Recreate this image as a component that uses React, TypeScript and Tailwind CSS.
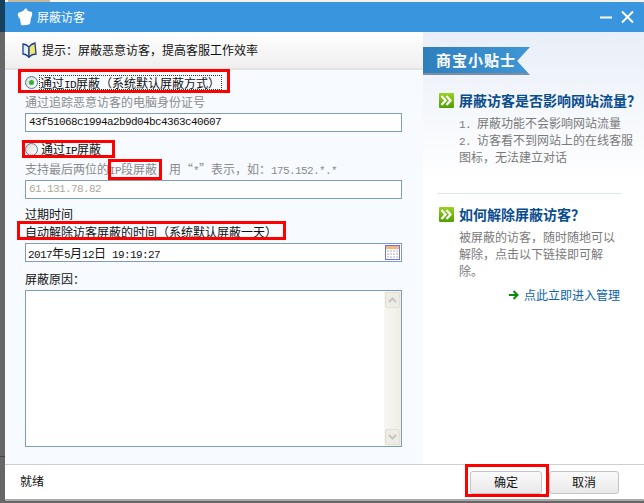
import React from 'react';

const cjk = "font-['Noto_Sans_CJK_SC','Liberation_Sans',sans-serif]";
const mono = "font-['Liberation_Mono','Noto_Sans_CJK_SC',monospace] text-[11px] leading-none tracking-[-0.6px]";

// half width latin, the dialog's font gives every latin char 6px
function L({ children }: { children: React.ReactNode }) {
  return <span className={`whitespace-pre ${mono}`}>{children}</span>;
}

function GreenChevrons({ className }: { className: string }) {
  return (
    <svg viewBox="0 0 15 15" className={className}>
      <defs>
        <linearGradient id="chev" x1="0" y1="0" x2="0" y2="1">
          <stop offset="0" stopColor="#9ad321" />
          <stop offset="1" stopColor="#4f9e06" />
        </linearGradient>
      </defs>
      <rect width="15" height="15" rx="1" fill="url(#chev)" />
      <path d="M2.5 3 L6.5 7.5 L2.5 12 M7.5 3 L11.5 7.5 L7.5 12" fill="none" stroke="#fff" strokeWidth="2.2" />
    </svg>
  );
}

function Radio({ checked }: { checked?: boolean }) {
  return (
    <span className="flex h-[13px] w-[13px] shrink-0 items-center justify-center rounded-full border border-[#4f7aa6] bg-gradient-to-br from-[#d8d8d2] to-white">
      {checked && <span className="h-[5px] w-[5px] rounded-full bg-[#35b035]" />}
    </span>
  );
}

function ScrollButton({ up }: { up?: boolean }) {
  return (
    <div className="flex h-[16px] w-[15px] items-center justify-center rounded-[2px] border border-[#e2e1d8] bg-[#eeede5]">
      <svg viewBox="0 0 9 6" className="h-[6px] w-[9px]">
        <path d={up ? 'M1 5 L4.5 1.5 L8 5' : 'M1 1 L4.5 4.5 L8 1'} fill="none" stroke="#c8c7be" strokeWidth="2" />
      </svg>
    </div>
  );
}

function RedBox({ className }: { className: string }) {
  return <div className={`pointer-events-none absolute border-[3px] border-[#ff0000] ${className}`} />;
}

export default function App() {
  return (
    <div className={`relative h-[503px] w-[644px] overflow-hidden bg-[#676767] pt-[2px] pl-[5px] text-[12px] ${cjk}`}>
      {/* stuff behind the dialog */}
      <div className="absolute top-0 left-0 h-[2px] w-full bg-[#f4f2ec]" />
      <div className="absolute top-0 left-[8px] h-[2px] w-[42px] bg-[#c9b79a]" />
      <div className="absolute top-0 left-0 h-[32px] w-[5px] bg-[#17405e]" />
      <div className="absolute top-[456px] left-0 h-px w-[5px] bg-[#444]" />

      <div className="relative flex h-[499px] w-[639px] flex-col overflow-hidden rounded-b-[3px] rounded-tr-[3px] bg-white">
        {/* title bar */}
        <div className="flex h-[30px] shrink-0 items-center bg-[#3a95df] pl-[12px] pr-[10px] text-white">
          <svg viewBox="0 0 16 18" className="h-[18px] w-[16px]">
            <path d="M9 0 L11 3 L15 4 Q16 7 14 10 L13 16 Q8 18 4 17 L3 11 Q0 8 1 5 L6 3 Z" fill="#fff" />
          </svg>
          <span className="ml-[4px] text-[12px]">屏蔽访客</span>
          <svg viewBox="0 0 34 14" className="ml-auto h-[14px] w-[34px]">
            <path d="M0 7.5 H12" stroke="#fff" strokeWidth="2" />
            <path d="M22 1.5 L33 12.5 M33 1.5 L22 12.5" stroke="#fff" strokeWidth="2" />
          </svg>
        </div>

        <div className="flex min-h-0 flex-1">
          {/* left column */}
          <div className="flex w-[418px] shrink-0 flex-col">
            <div className="flex h-[38px] shrink-0 items-center border-b-2 border-[#e4e4e4] bg-gradient-to-b from-white to-[#efefef] pl-[17px] text-[#111]">
              <svg viewBox="0 0 15 16" className="h-[16px] w-[15px]">
                <path d="M1 2 Q4 2 7 5 L7 15 Q4 12 1 12 Z" fill="#dff0fb" stroke="#1d3f8c" strokeWidth="1.3" />
                <path d="M7 5 Q9 2 13 1 L14 12 Q10 12 7 15 Z" fill="#f4e56c" stroke="#1d3f8c" strokeWidth="1.3" />
              </svg>
              <span className="ml-[5px]">提示：屏蔽恶意访客，提高客服工作效率</span>
            </div>

            <div className="flex-1 bg-[#f7fbff] pl-[20px]">
              <div className="mt-[3px] flex h-[18px] items-center text-[#111]">
                <Radio checked />
                <span className="ml-[1px] h-[15px] border border-dotted border-[#333] pr-[1px] leading-[13px]">通过<L>ID</L>屏蔽（系统默认屏蔽方式）</span>
              </div>
              <div className="mt-[3px] h-[16px] leading-[16px] text-[#8a8a8a]">通过追踪恶意访客的电脑身份证号</div>
              <div className="mt-[3px] flex h-[19px] w-[377px] items-center border border-[#7f9db9] bg-white pl-[3px] text-[#111]">
                <L>43f51068c1994a2b9d04bc4363c40607</L>
              </div>

              <div className="mt-[8px] flex h-[18px] items-center text-[#111]">
                <Radio />
                <span className="ml-[3px]">通过<L>IP</L>屏蔽</span>
              </div>
              <div className="mt-[3px] h-[16px] leading-[16px] whitespace-nowrap text-[#8a8a8a]">支持最后两位的<L>IP</L>段屏蔽，用“<L>*</L>”表示，如：<L>175.152.*.*</L></div>
              <div className="mt-[3px] flex h-[19px] w-[377px] items-center border border-[#7f9db9] bg-white pl-[3px] text-[#aca899]">
                <L>61.131.78.82</L>
              </div>

              <div className="mt-[7px] h-[16px] leading-[16px] text-[#111]">过期时间</div>
              <div className="mt-[2px] h-[16px] leading-[16px] text-[#111]">自动解除访客屏蔽的时间（系统默认屏蔽一天）</div>
              <div className="mt-[3px] flex h-[19px] w-[377px] items-center justify-between border border-[#7f9db9] bg-white pl-[2px] pr-[1px] text-[#111]">
                <span><L>2017</L>年<L>5</L>月<L>12</L>日<L> 19:19:27</L></span>
                <span className="flex h-[15px] w-[15px] flex-col border border-[#6f6ff0] bg-[#d5d5ea]">
                  <span className="h-[3px] w-full bg-[#f2b77c]" />
                  <span className="flex-1 bg-[linear-gradient(#fff_1px,transparent_1px),linear-gradient(90deg,#fff_1px,transparent_1px)] bg-[length:3px_3px]" />
                </span>
              </div>

              <div className="mt-[9px] h-[16px] leading-[16px] text-[#111]">屏蔽原因：</div>
              <div className="mt-[3px] flex h-[157px] w-[377px] justify-end border border-[#7f9db9] bg-white">
                <div className="flex w-[17px] flex-col justify-between bg-gradient-to-r from-[#f7f6f1] to-[#efeee6] p-[1px]">
                  <ScrollButton up />
                  <ScrollButton />
                </div>
              </div>
            </div>
          </div>

          {/* right column */}
          <div className="flex-1 bg-[linear-gradient(#e9eff8,#ffffff_150px)] pt-[15px] text-[#7a7a7a]">
            <div className="flex h-[28px] w-[107px] items-center border-b-2 border-[#7e8ea0] bg-gradient-to-r from-[#2f7fbd] to-[#3f97d6] pl-[13px] text-[15px] font-bold tracking-[1px] text-white [clip-path:polygon(0_0,100%_0,88%_50%,100%_100%,0_100%)]">
              商宝小贴士
            </div>

            <div className="mt-[18px] flex items-center pl-[16px]">
              <GreenChevrons className="h-[15px] w-[15px]" />
              <span className="ml-[5px] text-[14px] leading-[15px] font-bold whitespace-nowrap text-[#0a4d8f]">屏蔽访客是否影响网站流量？</span>
            </div>
            <div className="mt-[6px] pl-[36px] leading-[17px]">
              <div className="h-[17px]"><L>1. </L>屏蔽功能不会影响网站流量</div>
              <div className="h-[17px]"><L>2. </L>访客看不到网站上的在线客服</div>
              <div className="h-[17px]">图标，无法建立对话</div>
            </div>

            <div className="mt-[28px] ml-[14px] h-px w-[184px] bg-[#dfe6ec]" />

            <div className="mt-[13px] flex items-center pl-[16px]">
              <GreenChevrons className="h-[15px] w-[15px]" />
              <span className="ml-[5px] text-[14px] leading-[15px] font-bold text-[#0a4d8f]">如何解除屏蔽访客？</span>
            </div>
            <div className="mt-[6px] w-[196px] pl-[36px] leading-[17px]">被屏蔽的访客，随时随地可以解除，点击以下链接即可解除。</div>

            <div className="mt-[7px] flex items-center pl-[86px] text-[#0b63a8]">
              <svg viewBox="0 0 10 10" className="h-[10px] w-[10px]">
                <path d="M0 5 H8 M4.5 1 L8.5 5 L4.5 9" fill="none" stroke="#0a8a0a" strokeWidth="2" />
              </svg>
              <span className="ml-[5px]">点此立即进入管理</span>
            </div>
          </div>
        </div>

        {/* footer */}
        <div className="flex h-[37px] shrink-0 items-center justify-between border-t border-b-2 border-t-[#cfcfcf] border-b-[#a8a8a8] bg-white pl-[15px] pr-[25px] text-[#111]">
          <span className="-mt-[2px]">就绪</span>
          <div className="flex gap-[7px]">
            <button className="h-[23px] w-[72px] rounded-[3px] border border-[#c4c4c4] bg-gradient-to-b from-[#fafafa] to-[#e9e9e9] text-[12px] text-[#111]">确定</button>
            <button className="h-[23px] w-[70px] rounded-[3px] border border-[#c4c4c4] bg-gradient-to-b from-[#fafafa] to-[#e9e9e9] text-[12px] text-[#111]">取消</button>
          </div>
        </div>
      </div>

      {/* red annotation boxes drawn on the screenshot */}
      <RedBox className="top-[69px] left-[18px] h-[24px] w-[212px]" />
      <RedBox className="top-[140px] left-[22px] h-[18px] w-[93px]" />
      <RedBox className="top-[159px] left-[108px] h-[21px] w-[54px]" />
      <RedBox className="top-[221px] left-[17px] h-[19px] w-[269px]" />
      <RedBox className="top-[464px] left-[465px] h-[33px] w-[84px]" />
    </div>
  );
}
